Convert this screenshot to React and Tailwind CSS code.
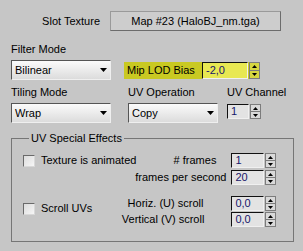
function Arrow({ down }) {
  return (
    <svg width="5" height="3" viewBox="0 0 5 3">
      <path d={down ? 'M0 0h5L2.5 3z' : 'M2.5 0L5 3H0z'} fill="#000" />
    </svg>
  );
}

function Select({ value, className = '' }) {
  return (
    <div
      className={`flex h-[20px] items-center justify-between border border-t-[#555] border-l-[#555] border-r-[#efefef] border-b-[#efefef] bg-gradient-to-b from-[#fbfbfb] to-[#dcdcdc] pl-[3px] pr-[3px] ${className}`}
    >
      <span>{value}</span>
      <svg width="7" height="4" viewBox="0 0 7 4">
        <path d="M0 0h7L3.5 4z" fill="#000" />
      </svg>
    </div>
  );
}

function Spinner({ value, boxW, h = 'h-[15px]', yellow }) {
  return (
    <div className={`flex shrink-0 ${h} gap-[1px]`}>
      <div
        className={`flex ${boxW} items-center border border-t-[#111] border-l-[#111] border-r-[#f0f0f0] border-b-[#f0f0f0] pl-[3px] text-[#16166a] ${
          yellow ? 'bg-[#e8e852]' : 'bg-[#e3e3e3]'
        }`}
      >
        {value}
      </div>
      <div
        className={`flex w-[11px] flex-col border border-[#7c7c7c] ${
          yellow ? 'bg-[#d6d640]' : 'bg-[#d9d9d9]'
        }`}
      >
        <div className="flex flex-1 items-center justify-center border-b border-[#7c7c7c]">
          <Arrow />
        </div>
        <div className="flex flex-1 items-center justify-center">
          <Arrow down />
        </div>
      </div>
    </div>
  );
}

function Check({ label }) {
  return (
    <div className="flex h-[15px] items-center">
      <div className="h-[12px] w-[12px] shrink-0 border border-t-[#6a6a6a] border-l-[#6a6a6a] border-r-[#d8d8d8] border-b-[#d8d8d8] bg-gradient-to-br from-[#dcdcdc] to-[#f6f6f6]" />
      <span className="ml-[6px]">{label}</span>
    </div>
  );
}

function Row({ label, gap, value, className = '' }) {
  return (
    <div className={`flex items-center justify-end ${className}`}>
      <span className={gap}>{label}</span>
      <Spinner value={value} boxW="w-[33px]" />
    </div>
  );
}

export default function App() {
  return (
    <div className="h-[251px] w-[303px] overflow-hidden whitespace-nowrap bg-[#c6c6c6] pl-[11px] pt-[11px] font-['Liberation_Sans',Arial,sans-serif] text-[11px] leading-[13px] text-black">
      {/* Slot texture */}
      <div className="flex items-center">
        <span className="w-[89px] text-right">Slot Texture</span>
        <button className="ml-[10px] h-[20px] w-[171px] border border-t-[#9a9a9a] border-l-[#9a9a9a] border-r-[#6c6c6c] border-b-[#6c6c6c] bg-[#cdcdcd] text-center">
          Map #23 (HaloBJ_nm.tga)
        </button>
      </div>

      {/* Filter + mip bias */}
      <div className="mt-[12px] flex">
        <div className="w-[100px]">
          <div>Filter Mode</div>
          <Select className="mt-[4px]" value="Bilinear" />
        </div>
        <div className="ml-[13px] mt-[19px] flex h-[17px] w-[136px] items-center justify-between bg-[#c9c922] pl-[3px]">
          <span>Mip LOD Bias</span>
          <Spinner value="-2,0" boxW="w-[46px]" h="h-[17px]" yellow />
        </div>
      </div>

      {/* Tiling / UV op / channel */}
      <div className="mt-[6px] flex">
        <div className="w-[100px]">
          <div>Tiling Mode</div>
          <Select className="mt-[4px]" value="Wrap" />
        </div>
        <div className="ml-[17px] w-[90px]">
          <div>UV Operation</div>
          <Select className="mt-[4px]" value="Copy" />
        </div>
        <div className="ml-[9px]">
          <div>UV Channel</div>
          <div className="mt-[5px]">
            <Spinner value="1" boxW="w-[22px]" />
          </div>
        </div>
      </div>

      {/* UV special effects */}
      <fieldset className="mt-[9px] w-[283px] border border-[#767676] pb-[14px] pl-[11px] pr-[17px] pt-[8px]">
        <legend className="ml-[6px] px-[2px]">UV Special Effects</legend>

        <div className="flex">
          <div className="min-w-0 flex-1">
            <Check label="Texture is animated" />
          </div>
          <div className="w-[140px] shrink-0">
            <Row label="# frames" gap="mr-[15px]" value="1" />
            <Row label="frames per second" gap="mr-[5px]" value="20" className="mt-[2px]" />
          </div>
        </div>

        <div className="mt-[11px] flex">
          <div className="mt-[5px] min-w-0 flex-1">
            <Check label="Scroll UVs" />
          </div>
          <div className="w-[140px] shrink-0">
            <Row label="Horiz. (U) scroll" gap="mr-[28px]" value="0,0" />
            <Row label="Vertical (V) scroll" gap="mr-[27px]" value="0,0" className="mt-[1px]" />
          </div>
        </div>
      </fieldset>
    </div>
  );
}
